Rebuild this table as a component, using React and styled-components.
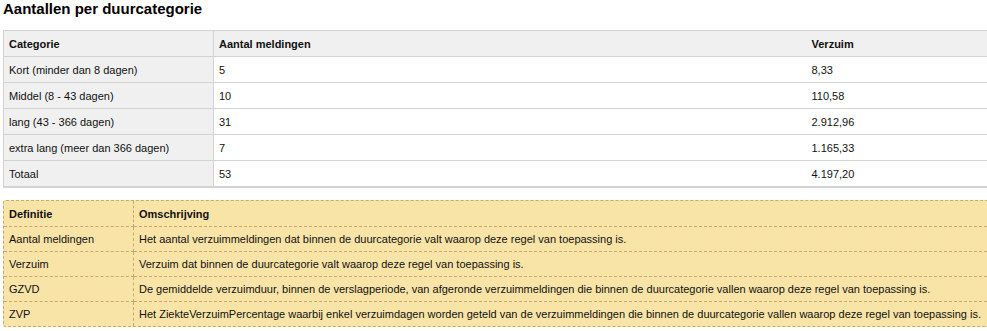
import React from 'react';
import styled, { createGlobalStyle, css } from 'styled-components';

const GlobalStyle = createGlobalStyle`
  html, body {
    margin: 0;
    padding: 0;
    overflow: hidden;
    background: #fff;
  }
  body {
    font-family: "Liberation Sans", Arial, sans-serif;
    color: #111;
  }
`;

const Page = styled.div`
  width: 1000px;
  padding: 0 0 0 3px;
`;

const Title = styled.h2`
  margin: 0 0 13px;
  font-size: 15px;
  line-height: 17px;
  font-weight: bold;
  color: #000;
`;

const DataTable = styled.table`
  width: 100%;
  border-collapse: collapse;
  border: 1px solid #d3d3d3;
  border-bottom-width: 2px;
  font-size: 11px;
  table-layout: fixed;
`;

const DataCell = styled.td`
  height: 25px;
  padding: 0 5px;
  border-bottom: 1px solid #d3d3d3;
  background: ${p => (p.$shade ? '#f0f0f0' : '#fff')};
  text-align: left;
  vertical-align: middle;
  white-space: nowrap;
  ${p => p.$head && css`font-weight: bold;`}
  ${p => p.$first && css`border-right: 1px solid #d3d3d3;`}
`;

const DefTable = styled.table`
  width: 100%;
  margin-top: 12px;
  border-collapse: separate;
  border-spacing: 0;
  border: 1px dashed #c6ab6c;
  border-radius: 3px;
  background: #f9e4a7;
  font-size: 11px;
  table-layout: fixed;
`;

const DefCell = styled.td`
  height: ${p => (p.$head ? '25px' : '24px')};
  padding: 0 5px;
  text-align: left;
  vertical-align: middle;
  white-space: nowrap;
  border-bottom: ${p => (p.$last ? 'none' : '1px dashed #c6ab6c')};
  ${p => p.$head && css`font-weight: bold;`}
  ${p => p.$first && css`border-right: 1px dashed #c6ab6c;`}
`;

const rows = [
  ['Kort (minder dan 8 dagen)', '5', '8,33'],
  ['Middel (8 - 43 dagen)', '10', '110,58'],
  ['lang (43 - 366 dagen)', '31', '2.912,96'],
  ['extra lang (meer dan 366 dagen)', '7', '1.165,33'],
  ['Totaal', '53', '4.197,20'],
];

const definitions = [
  ['Aantal meldingen', 'Het aantal verzuimmeldingen dat binnen de duurcategorie valt waarop deze regel van toepassing is.'],
  ['Verzuim', 'Verzuim dat binnen de duurcategorie valt waarop deze regel van toepassing is.'],
  ['GZVD', 'De gemiddelde verzuimduur, binnen de verslagperiode, van afgeronde verzuimmeldingen die binnen de duurcategorie vallen waarop deze regel van toepassing is.'],
  ['ZVP', 'Het ZiekteVerzuimPercentage waarbij enkel verzuimdagen worden geteld van de verzuimmeldingen die binnen de duurcategorie vallen waarop deze regel van toepassing is.'],
];

export default function App() {
  return (
    <Page>
      <GlobalStyle />
      <Title>Aantallen per duurcategorie</Title>
      <DataTable>
        <colgroup>
          <col style={{ width: 210 }} />
          <col style={{ width: 593 }} />
          <col />
        </colgroup>
        <thead>
          <tr>
            <DataCell as="th" $head $shade $first>Categorie</DataCell>
            <DataCell as="th" $head $shade>Aantal meldingen</DataCell>
            <DataCell as="th" $head $shade>Verzuim</DataCell>
          </tr>
        </thead>
        <tbody>
          {rows.map(([cat, count, days]) => (
            <tr key={cat}>
              <DataCell $shade $first>{cat}</DataCell>
              <DataCell>{count}</DataCell>
              <DataCell>{days}</DataCell>
            </tr>
          ))}
        </tbody>
      </DataTable>

      <DefTable>
        <colgroup>
          <col style={{ width: 130 }} />
          <col />
        </colgroup>
        <thead>
          <tr>
            <DefCell as="th" $head $first>Definitie</DefCell>
            <DefCell as="th" $head>Omschrijving</DefCell>
          </tr>
        </thead>
        <tbody>
          {definitions.map(([term, text], i) => {
            const last = i === definitions.length - 1;
            return (
              <tr key={term}>
                <DefCell $first $last={last}>{term}</DefCell>
                <DefCell $last={last}>{text}</DefCell>
              </tr>
            );
          })}
        </tbody>
      </DefTable>
    </Page>
  );
}
